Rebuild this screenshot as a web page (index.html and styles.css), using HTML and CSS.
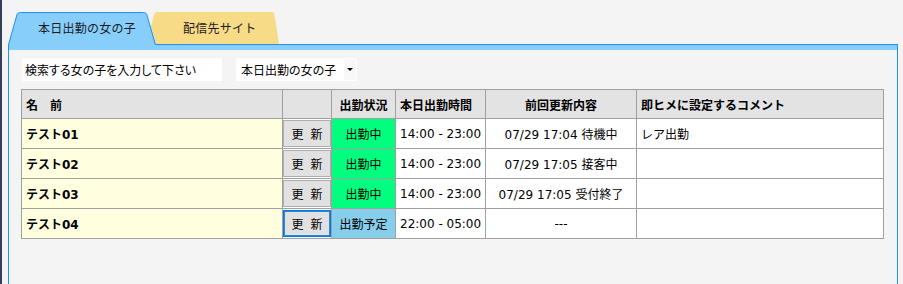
FILE: index.html
```html
<!DOCTYPE html>
<html lang="ja">
<head>
  <meta charset="UTF-8" />
  <meta name="viewport" content="width=device-width, initial-scale=1.0"/>
  <title>本日出勤の女の子</title>
  <link rel="stylesheet" href="styles.css">
</head>
<body>
  <div class="tabs">
    <div class="tab tab-active">
      <svg class="tab-shape" viewBox="0 0 148 33" width="148" height="33">
        <path d="M0 33 L9 2.5 Q9.8 0.5 12.5 0.5 L135.5 0.5 Q138 0.5 138.8 2.5 L148 33 Z" fill="#87cefa" />
        <path d="M0.5 33 L9 2.5 Q9.8 0.5 12.5 0.5 L135.5 0.5 Q138 0.5 138.8 2.5 L147.3 32.5 L148 32.5" fill="none" stroke="#1e90ff" />
      </svg>
      <span class="tab-label">本日出勤の女の子</span>
    </div>
    <div class="tab tab-other">
      <svg class="tab-shape" viewBox="0 0 133 32" width="133" height="32">
        <path d="M0 32 L8.2 2 Q8.8 0 11 0 L125.5 0 Q127.8 0 128.4 2 L133 32 Z" fill="#f8db87" />
      </svg>
      <span class="tab-label">配信先サイト</span>
    </div>
  </div>

  <div class="panel">
    <div class="panel-band"></div>
    <div class="panel-body">
      <div class="search-row">
        <input class="search" type="text" value="検索する女の子を入力して下さい" />
        <div class="select">
          <span>本日出勤の女の子</span>
          <span class="caret"></span>
        </div>
      </div>

      <table class="roster">
        <colgroup>
          <col class="c-name">
          <col class="c-btn">
          <col class="c-status">
          <col class="c-time">
          <col class="c-last">
          <col class="c-comment">
        </colgroup>
        <thead>
          <tr>
            <th class="left">名　前</th>
            <th></th>
            <th>出勤状況</th>
            <th class="left">本日出勤時間</th>
            <th>前回更新内容</th>
            <th class="left">即ヒメに設定するコメント</th>
          </tr>
        </thead>
        <tbody>
          <tr>
            <td class="name">テスト01</td>
            <td class="btn-cell"><button class="update">更 新</button></td>
            <td class="status on">出勤中</td>
            <td class="time">14:00 - 23:00</td>
            <td class="last">07/29 17:04 待機中</td>
            <td class="comment">レア出勤</td>
          </tr>
          <tr>
            <td class="name">テスト02</td>
            <td class="btn-cell"><button class="update">更 新</button></td>
            <td class="status on">出勤中</td>
            <td class="time">14:00 - 23:00</td>
            <td class="last">07/29 17:05 接客中</td>
            <td class="comment"></td>
          </tr>
          <tr>
            <td class="name">テスト03</td>
            <td class="btn-cell"><button class="update">更 新</button></td>
            <td class="status on">出勤中</td>
            <td class="time">14:00 - 23:00</td>
            <td class="last">07/29 17:05 受付終了</td>
            <td class="comment"></td>
          </tr>
          <tr>
            <td class="name">テスト04</td>
            <td class="btn-cell"><button class="update focused">更 新</button></td>
            <td class="status planned">出勤予定</td>
            <td class="time">22:00 - 05:00</td>
            <td class="last">---</td>
            <td class="comment"></td>
          </tr>
        </tbody>
      </table>
    </div>
  </div>
</body>
</html>
```

FILE: styles.css
```css
html, body {
  height: 100%;
}

body {
  margin: 0;
  box-sizing: border-box;
  padding-top: 12px;
  border-left: 2px solid #34405a;
  background-color: #f4f4f4;
  color: #000000;
  font-family: 'DejaVu Sans', 'Noto Sans CJK JP', sans-serif;
  font-size: 12px;
  overflow: hidden;
}

/* tabs */
.tabs {
  position: relative;
  z-index: 1;
  display: flex;
  height: 32px;
  margin-left: 6px;
}

.tab {
  position: relative;
  height: 32px;
  line-height: 32px;
  font-family: 'Noto Sans CJK JP', sans-serif;
  color: #1a1a1a;
}

.tab-shape {
  position: absolute;
  left: 0;
  top: 0;
}

.tab-label {
  position: relative;
  letter-spacing: 0.25px;
}

.tab-active {
  width: 148px;
  z-index: 2;
}

.tab-active .tab-label {
  padding-left: 30px;
}

.tab-other {
  width: 133px;
  margin-left: -10px;
  z-index: 1;
}

.tab-other .tab-label {
  padding-left: 37px;
}

/* panel */
.panel {
  width: 890px;
  height: 240px;
  margin-left: 6px;
  box-sizing: border-box;
  border: 1px solid #1e90ff;
  border-bottom: none;
  background: #f4f4f4;
}

.panel-band {
  height: 5px;
  background: #87cefa;
}

.panel-body {
  padding: 8px 12px 0;
}

.search-row {
  display: flex;
  gap: 14px;
  padding-left: 1px;
  margin-bottom: 8px;
}

.search {
  width: 200px;
  height: 23px;
  box-sizing: border-box;
  margin: 0;
  padding: 0 3px;
  border: none;
  outline: none;
  background: #ffffff;
  color: #000000;
  font-family: 'Noto Sans CJK JP', sans-serif;
  font-size: 12px;
  font-feature-settings: "palt";
}

.select {
  display: flex;
  align-items: center;
  width: 121px;
  height: 23px;
  box-sizing: border-box;
  padding-left: 5px;
  background: #ffffff;
  font-family: 'Noto Sans CJK JP', sans-serif;
  font-feature-settings: "palt";
}

.caret {
  margin-left: auto;
  width: 12px;
  height: 21px;
  margin-right: 1px;
  background: #f8f8f8;
  position: relative;
}

.caret::after {
  content: "";
  position: absolute;
  left: 3px;
  top: 9px;
  border-left: 3px solid transparent;
  border-right: 3px solid transparent;
  border-top: 3px solid #000000;
}

/* table */
.roster {
  width: 862px;
  table-layout: fixed;
  border-collapse: collapse;
  border: 1px solid #a0a0a0;
  background: #ffffff;
}

.c-name { width: 261px; }
.c-btn { width: 49px; }
.c-status { width: 64px; }
.c-time { width: 90px; }
.c-last { width: 151px; }
.c-comment { width: 247px; }

.roster th,
.roster td {
  border: 1px solid #a0a0a0;
  padding: 0;
  text-align: center;
  white-space: nowrap;
  overflow: hidden;
}

.roster thead tr {
  height: 29px;
}

.roster tbody tr {
  height: 30px;
}

.roster th {
  background: #e3e3e3;
  font-weight: bold;
}

.roster th.left,
.roster td.comment,
.roster td.time {
  text-align: left;
  padding-left: 4px;
}

.roster td.name {
  text-align: left;
  padding-left: 4px;
  background: #ffffe0;
  font-weight: bold;
}

.status.on {
  background: #00ff7f;
}

.status.planned {
  background: #87ceeb;
}

.update {
  display: block;
  width: 48px;
  height: 27px;
  margin: 0;
  padding: 0;
  border: 1px solid #adadad;
  background: #e1e1e1;
  color: #000000;
  font-family: 'DejaVu Sans', 'Noto Sans CJK JP', sans-serif;
  font-size: 12px;
  word-spacing: 3px;
}

.update.focused {
  border-color: #0078d7;
  box-shadow: inset 0 0 0 1px #2a8ae0;
}
```
